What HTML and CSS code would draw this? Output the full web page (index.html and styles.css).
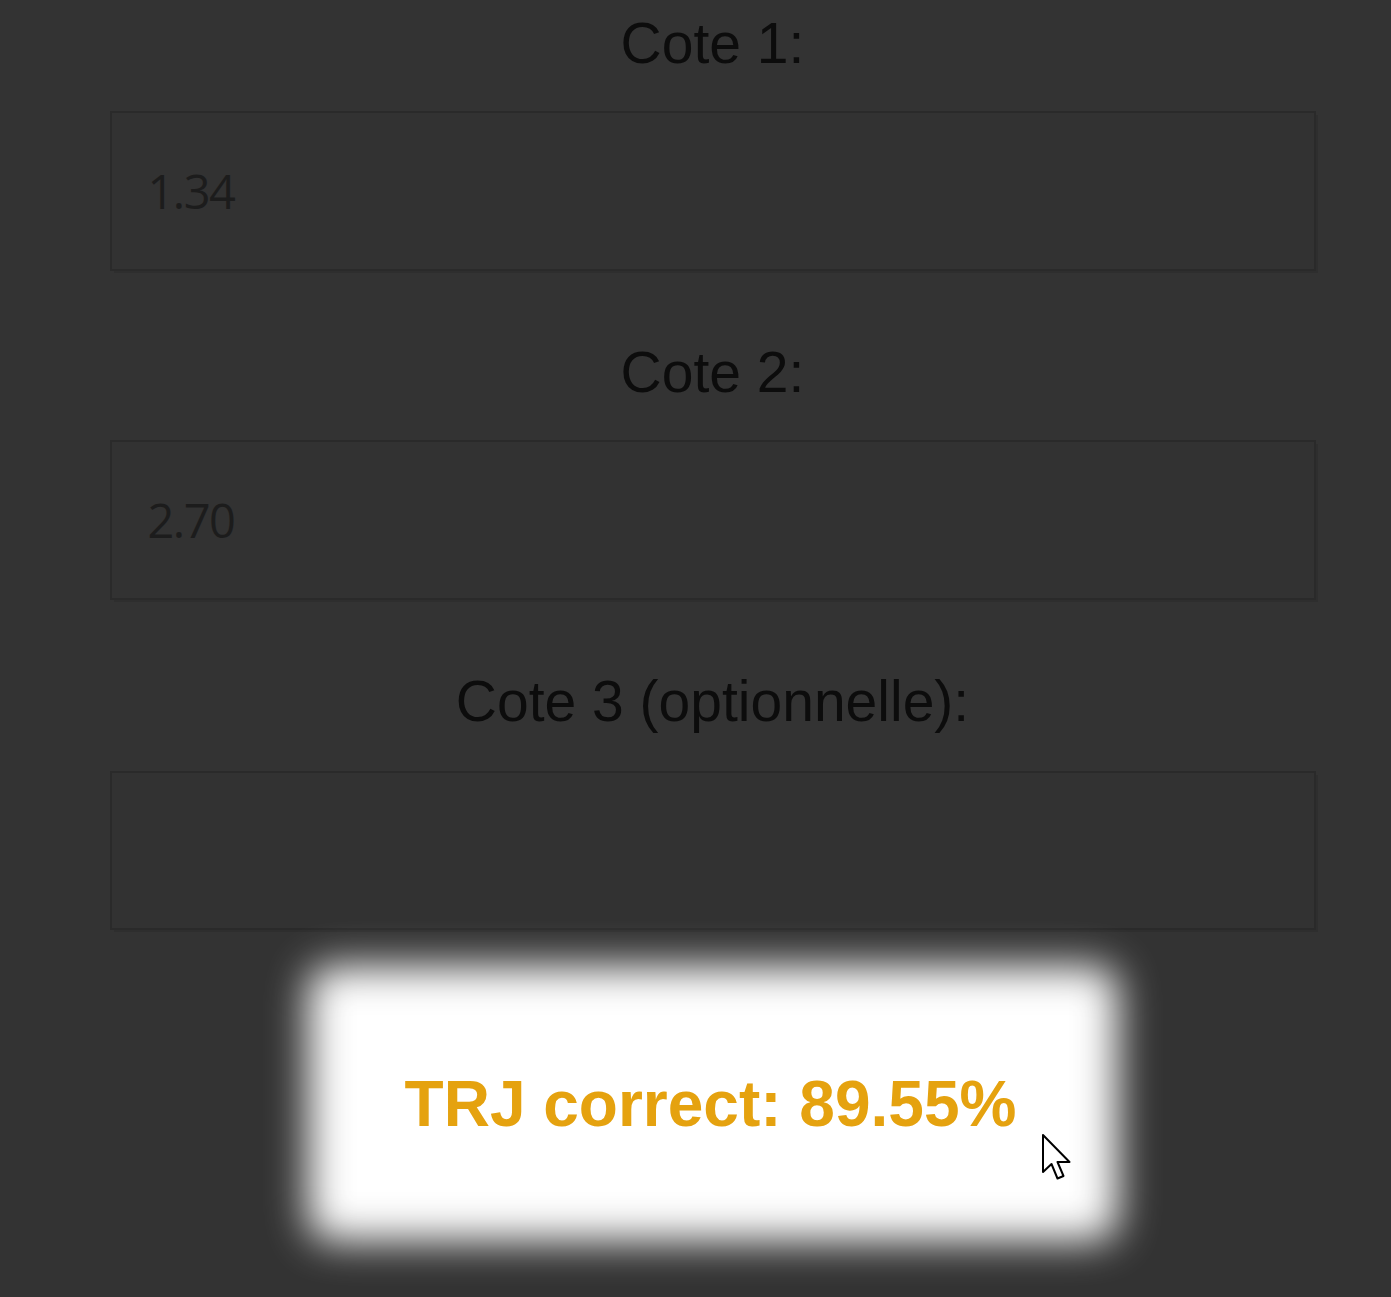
FILE: index.html
```html
<!DOCTYPE html>
<html lang="fr">
<head>
<meta charset="utf-8">
<title>Calculateur TRJ</title>
<link rel="stylesheet" href="styles.css">
</head>
<body>
<main class="form">
  <label class="label">Cote 1:</label>
  <div class="field"><span class="value">1.34</span></div>
  <label class="label">Cote 2:</label>
  <div class="field"><span class="value">2.70</span></div>
  <label class="label">Cote 3 (optionnelle):</label>
  <div class="field"></div>
  <div class="result">
    <div class="glow"></div>
    <p class="result-text">TRJ correct: 89.55%</p>
    <svg class="cursor" width="32" height="48" viewBox="0 0 32 48">
      <path d="M2 2 L2 39 L10.5 31 L16.5 45.5 L22.5 43 L16.5 29 L28.5 29 Z" fill="#fff" stroke="#000" stroke-width="2" stroke-linejoin="round"/>
    </svg>
  </div>
</main>
</body>
</html>
```
FILE: styles.css
```css
html, body {
  margin: 0;
  padding: 0;
  background: #333333;
}
body {
  width: 1391px;
  height: 1297px;
  overflow: hidden;
}
.form {
  display: flex;
  flex-direction: column;
  align-items: center;
  padding-top: 11px;
  padding-left: 34px;
}
.label {
  font-family: "Liberation Sans", Arial, sans-serif;
  font-size: 57px;
  line-height: 65px;
  color: #0c0c0c;
  text-align: center;
}
.field {
  box-sizing: border-box;
  width: 1206px;
  height: 160px;
  margin: 35px 0 69px;
  border: 2px solid #2a2a2a;
  box-shadow: 3px 3px 0 -1px #2e2e2e;
  background: #323232;
  display: flex;
  align-items: center;
  padding-left: 36px;
}
.field:nth-of-type(3) {
  margin-top: 37px;
  height: 159px;
  margin-bottom: 0;
}
.value {
  font-family: "Open Sans", "Noto Sans", sans-serif;
  font-weight: 400;
  font-size: 47px;
  color: #1c1c1c;
  letter-spacing: -1.5px;
}
.result {
  position: relative;
  width: 810px;
  height: 275px;
  margin-top: 36px;
  display: flex;
  align-items: center;
  justify-content: center;
}
.glow {
  position: absolute;
  inset: 0;
  background: #ffffff;
  border-radius: 24px;
  filter: blur(20px);
}
.result-text {
  position: relative;
  margin: 0;
  font-family: "Liberation Sans", Arial, sans-serif;
  font-weight: bold;
  font-size: 64px;
  color: #e5a20f;
  margin-left: -4px;
}
.cursor {
  position: absolute;
  left: 733px;
  top: 167px;
}
```
